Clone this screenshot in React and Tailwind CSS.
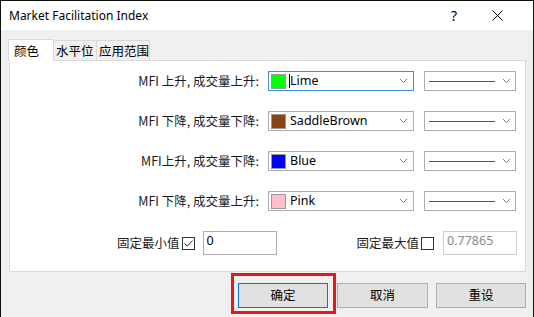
import React from "react";

const cjk = { fontFamily: '"Noto Sans CJK SC", "Noto Sans", sans-serif' };
const latin = { fontFamily: '"Noto Sans", "Noto Sans CJK SC", sans-serif' };

const Chevron = ({ className }) => (
  <svg width="9" height="6" viewBox="0 0 9 6" className={className}>
    <path d="M1 1 L4.5 4.5 L8 1" fill="none" stroke="#7a7a7a" strokeWidth="1" />
  </svg>
);

const rows = [
  { label: "MFI 上升, 成交量上升:", name: "Lime", color: "bg-[#00ff00]", focused: true },
  { label: "MFI 下降, 成交量下降:", name: "SaddleBrown", color: "bg-[#8b4513]" },
  { label: "MFI上升, 成交量下降:", name: "Blue", color: "bg-[#0000ff]" },
  { label: "MFI 下降, 成交量上升:", name: "Pink", color: "bg-[#ffc0cb]" },
];

const ColorRow = ({ row }) => (
  <div className="flex items-center h-[20px]">
    <div className="w-[250px] text-right text-[12.5px] text-[#1a1a1a] pr-[1px]" style={cjk}>
      {row.label}
    </div>
    <div
      className={
        "ml-[8px] w-[146px] h-[20px] bg-white flex items-center border " +
        (row.focused ? "border-[#3c8fe0]" : "border-[#adadad]")
      }
    >
      <div className={"ml-[2px] w-[15px] h-[15px] border border-[#9a9a9a] " + row.color} />
      {row.focused && <div className="ml-[3px] w-px h-[14px] bg-black" />}
      <span
        className={"text-[12.5px] text-black " + (row.focused ? "ml-0" : "ml-[4px]")}
        style={latin}
      >
        {row.name}
      </span>
      <Chevron className="ml-auto mr-[5px]" />
    </div>
    <div className="ml-[10px] w-[92px] h-[20px] bg-white border border-[#adadad] flex items-center">
      <div className="ml-[4px] w-[66px] h-px bg-[#555]" />
      <Chevron className="ml-auto mr-[4px]" />
    </div>
  </div>
);

const Check = ({ checked }) => (
  <div className="w-[13px] h-[13px] border border-[#333] bg-white flex items-center justify-center">
    {checked && (
      <svg width="11" height="11" viewBox="0 0 11 11">
        <path d="M1.5 5.5 L4.2 8.2 L9.5 2.5" fill="none" stroke="#222" strokeWidth="1" />
      </svg>
    )}
  </div>
);

export default function App() {
  return (
    <div className="w-[534px] h-[317px] bg-[#0d120d] pl-px pt-px flex">
      <div className="w-[532px] h-[316px] bg-[#f0f0f0] flex flex-col">
        {/* title bar */}
        <div className="h-[29px] bg-white flex items-center">
          <span className="ml-[8px] text-[12px] text-black" style={latin}>
            Market Facilitation Index
          </span>
          <span className="ml-auto text-[14px] text-black" style={latin}>?</span>
          <svg width="11" height="11" viewBox="0 0 11 11" className="ml-[35px] mr-[30px]">
            <path d="M0.5 0.5 L10.5 10.5 M10.5 0.5 L0.5 10.5" stroke="#000" strokeWidth="1" />
          </svg>
        </div>

        {/* tabs */}
        <div className="mt-[8px] ml-[7px] flex items-end h-[22px]" style={cjk}>
          <div className="w-[46px] h-[22px] bg-white border border-b-0 border-[#d9d9d9] text-[12.5px] pl-[5px] pt-[2px] relative z-10 -mb-px">
            颜色
          </div>
          <div className="w-[43px] h-[20px] border border-b-0 border-l-0 border-[#d9d9d9] text-[12.5px] pl-[2px] pt-[1px]">
            水平位
          </div>
          <div className="w-[53px] h-[20px] border border-b-0 border-l-0 border-[#d9d9d9] text-[12.5px] pl-[2px] pt-[1px]">
            应用范围
          </div>
        </div>

        {/* panel */}
        <div className="ml-[8px] w-[517px] h-[212px] bg-white border border-[#d9d9d9] flex flex-col pt-[10px]">
          <div className="flex flex-col gap-[20px]">
            {rows.map((r) => (
              <ColorRow key={r.name} row={r} />
            ))}
          </div>
          <div className="mt-[20px] flex items-center h-[24px] text-[12.5px] text-[#1a1a1a]" style={cjk}>
            <span className="ml-[107px]">固定最小值</span>
            <div className="ml-[2px]"><Check checked /></div>
            <div className="ml-[8px] w-[74px] h-[24px] border border-[#adadad] text-[12.5px] pl-[3px] leading-[18px] text-black" style={latin}>
              0
            </div>
            <span className="ml-[80px]">固定最大值</span>
            <div className="ml-[2px]"><Check /></div>
            <div className="ml-[9px] w-[74px] h-[24px] border border-[#cccccc] text-[12.5px] pl-[3px] leading-[18px] text-[#8a8a8a]" style={latin}>
              0.77865
            </div>
          </div>
        </div>

        {/* buttons */}
        <div className="mt-[11px] flex text-[12.5px] text-black" style={cjk}>
          <div className="ml-[237px] relative">
            <div className="absolute -left-[7px] -top-[10px] w-[105px] h-[41px] border-[3px] border-[#e8161e]" />
            <button className="w-[90px] h-[25px] bg-[#e1e1e1] border border-[#0078d7]">确定</button>
          </div>
          <button className="ml-[9px] w-[91px] h-[25px] bg-[#e1e1e1] border border-[#adadad]">取消</button>
          <button className="ml-[8px] w-[90px] h-[25px] bg-[#e1e1e1] border border-[#adadad]">重设</button>
        </div>
      </div>
    </div>
  );
}
